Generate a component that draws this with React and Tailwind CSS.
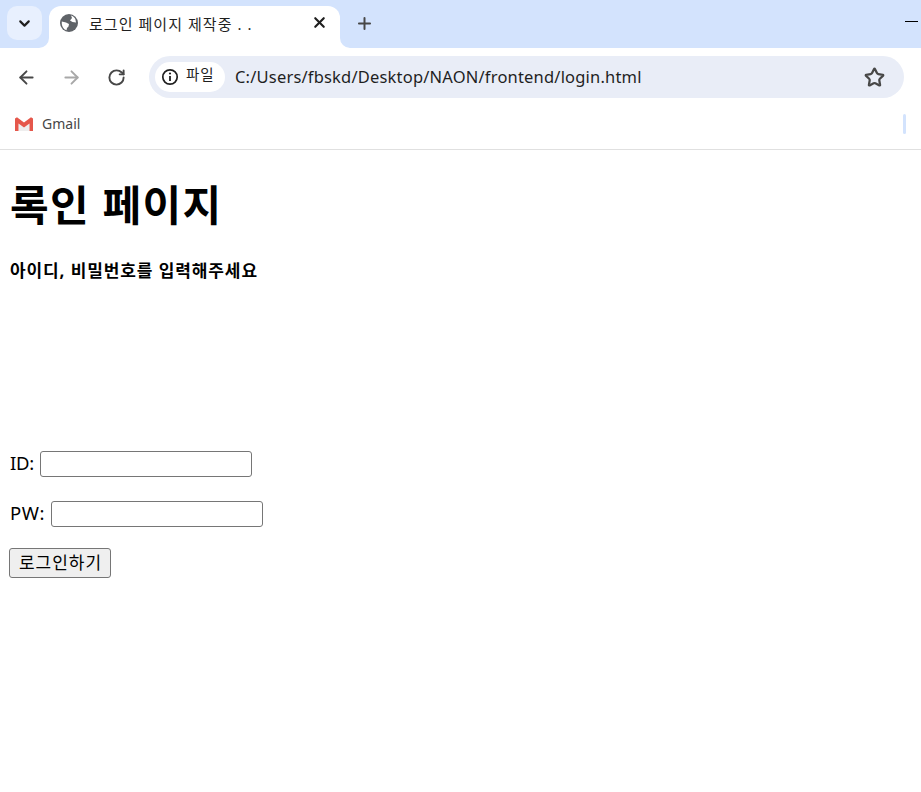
import { Plus, X, ChevronDown, ArrowLeft, ArrowRight, RotateCw, Star } from "lucide-react"

const uiFont = "font-['Noto_Sans','Noto_Sans_CJK_KR',sans-serif]"

const Globe = () => (
  <svg width="20" height="20" viewBox="0 0 20 20">
    <circle cx="10" cy="10" r="9" fill="#5f6368" />
    <path d="M12 2.500c1.800.6 3.300 1.800 4.300 3.500L17 9.500l-3.500-.5-2.500-1.500 2-2.500z" fill="#fff" />
    <path d="M2.800 8.500l4.200 1 3 1.500-.5 2.500-1.500 1.500-.5 2.200C4.500 16.500 2.400 13 2.800 8.500z" fill="#fff" />
  </svg>
)

const InfoIcon = () => (
  <svg width="18" height="18" viewBox="0 0 18 18" fill="none">
    <circle cx="9" cy="9" r="7.200" stroke="#1f1f1f" strokeWidth="1.700" />
    <path d="M9 8v5" stroke="#1f1f1f" strokeWidth="1.800" />
    <circle cx="9" cy="5.500" r="1.100" fill="#1f1f1f" />
  </svg>
)

const GmailIcon = () => (
  <svg width="20" height="16" viewBox="0 0 20 16">
    <path d="M4.500 15V7.500L10 11.500l5.500-4V15z" fill="#eeeeee" />
    <path d="M1 15h3.500V7.500L10 11.500l5.500-4V15H19V2.500L17 1.200 10 6.500 3 1.200 1 2.500z" fill="#e5574b" />
  </svg>
)

const Flare = ({ className, d }) => (
  <svg width="10" height="10" viewBox="0 0 10 10" className={className}>
    <path d={d} fill="#fff" />
  </svg>
)

const TabBar = () => (
  <div className="flex h-12 items-end bg-[#d3e3fd] pl-[7px]">
    <div className="mb-[8px] flex h-[34px] w-[35px] items-center justify-center rounded-[10px] bg-[#e8f0fe]">
      <ChevronDown size={17} strokeWidth={3} color="#1f1f1f" />
    </div>
    <div className="relative ml-[7px] flex h-[42px] w-[291px] items-start rounded-t-[12px] bg-white pl-[10px] pr-[12px] pt-[7px]">
      <Flare className="absolute -left-[10px] bottom-0" d="M10 0v10H0A10 10 0 0 0 10 0z" />
      <Flare className="absolute -right-[10px] bottom-0" d="M0 0v10h10A10 10 0 0 1 0 0z" />
      <Globe />
      <span className="ml-[10px] mt-[1px] flex-1 text-[15px] leading-[20px] tracking-[1.050px] text-[#1f1f1f]">로그인 페이지 제작중 . .</span>
      <X size={17} strokeWidth={3} color="#1f1f1f" className="mt-[1px]" />
    </div>
    <div className="mb-[10px] ml-[15px] flex h-[30px] items-center">
      <Plus size={19} strokeWidth={2.500} color="#474747" />
    </div>
    <div className="mb-[26px] ml-auto mr-[3px] h-px w-[13px] bg-black" />
  </div>
)

const Toolbar = () => (
  <div className="flex h-[58px] items-center rounded-tl-[10px] bg-white pl-[16px] pr-[17px]">
    <ArrowLeft size={21} strokeWidth={2.200} color="#474747" />
    <ArrowRight size={21} strokeWidth={2.200} color="#a8a8a8" className="ml-[24px]" />
    <RotateCw size={19} strokeWidth={2.400} color="#474747" className="ml-[25px]" />
    <div className="ml-[23px] flex h-[42px] flex-1 items-center rounded-full bg-[#e9edf7] pl-[6px] pr-[19px]">
      <div className="flex h-[30px] w-[70px] items-center rounded-full bg-white pl-[6px]">
        <InfoIcon />
        <span className="ml-[7px] pb-[4px] text-[14.500px] tracking-[0.8px] text-[#1f1f1f]">파일</span>
      </div>
      <span className="ml-[10px] flex-1 text-[16.500px] tracking-[0.19px] text-[#1f1f1f]">C:/Users/fbskd/Desktop/NAON/frontend/login.html</span>
      <Star size={21} strokeWidth={2.600} color="#474747" />
    </div>
  </div>
)

const BookmarkBar = () => (
  <div className="flex h-[44px] items-center border-b border-[#e0e0e0] pb-[8px] pl-[14px] pr-[15px]">
    <GmailIcon />
    <span className="ml-[8px] text-[14px] text-[#474747]">Gmail</span>
    <div className="ml-auto h-[20px] w-[3px] rounded-sm bg-[#d3e3fd]" />
  </div>
)

const App = () => {
  return (
    <div className={`h-[792px] w-[921px] overflow-hidden bg-white ${uiFont}`}>
      <TabBar />
      <Toolbar />
      <BookmarkBar />
      <div className="pl-[10px] text-black">
        <h1 className="mt-[25px] text-[42px] font-bold leading-[60px] tracking-[1.400px]">록인 페이지</h1>
        <p className="mt-[24px] text-[17px] font-bold leading-[24px] tracking-[0.9px]">아이디, 비밀번호를 입력해주세요</p>
        <form>
          <div className="mt-[168px] flex h-[26px] items-center text-[18.500px]">
            <label className="w-[25px] pb-[3px] tracking-[-0.3px]">ID:</label>
            <input type="text" className="ml-[5px] h-[26px] w-[212px] rounded-[3px] border border-[#767676]" />
          </div>
          <div className="mt-[24px] flex h-[26px] items-center text-[18.500px]">
            <label className="pb-[2px] tracking-[0.5px]">PW:</label>
            <input type="password" className="ml-[6px] h-[26px] w-[212px] rounded-[3px] border border-[#767676]" />
          </div>
          <button type="button" className="-ml-[1px] mt-[21px] h-[30px] w-[102px] rounded-[3px] border border-[#767676] bg-[#efefef] pl-[1px] text-[17px] tracking-[1px] text-black">
            로그인하기
          </button>
        </form>
      </div>
    </div>
  )
}

export default App
